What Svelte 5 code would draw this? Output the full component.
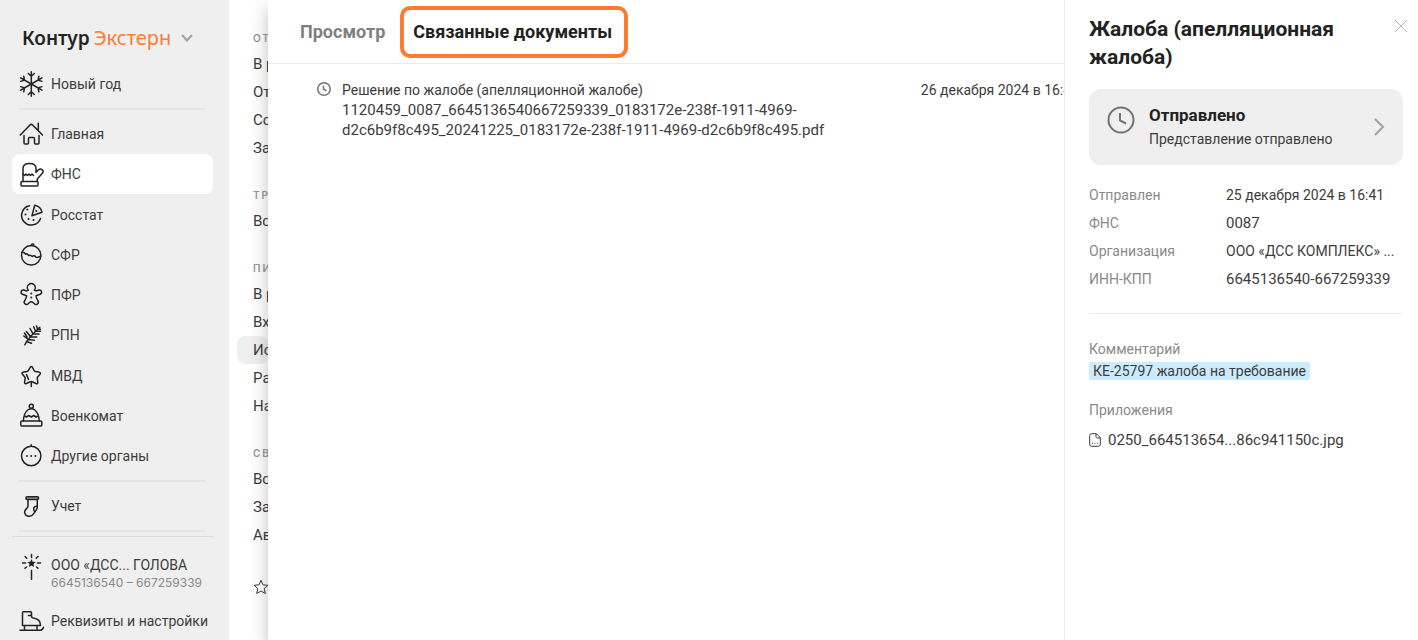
<script>
    let activeItem = "ФНС";
    let activeTab = "Связанные документы";

    const organs = [
        { label: "Главная", icon: "house" },
        { label: "ФНС", icon: "mitten" },
        { label: "Росстат", icon: "pizza" },
        { label: "СФР", icon: "ball" },
        { label: "ПФР", icon: "cookie" },
        { label: "РПН", icon: "branch" },
        { label: "МВД", icon: "star" },
        { label: "Военкомат", icon: "hat" },
        { label: "Другие органы", icon: "dots" },
    ];

    const sections = [
        { title: "От", links: ["В р", "От", "Со", "За"] },
        { title: "Тр", links: ["Вс"] },
        { title: "Пи", links: ["В р", "Вх", "Ис", "Ра", "На"] },
        { title: "Св", links: ["Вс", "За", "Ав"] },
    ];

    const tabs = ["Просмотр", "Связанные документы"];

    const details = [
        { term: "Отправлен", value: "25 декабря 2024 в 16:41" },
        { term: "ФНС", value: "0087", code: true },
        { term: "Организация", value: "ООО «ДСС КОМПЛЕКС» ..." },
        { term: "ИНН-КПП", value: "6645136540-667259339", code: true },
    ];
</script>

{#snippet icon(name)}
    <svg class="icon" viewBox="0 0 24 24" aria-hidden="true">
        {#if name === "snow"}
            {#each [0, 60, 120, 180, 240, 300] as angle}
                <path d="M12.3 12V-.3M9.300 1.500l3 2.700 3-2.700" transform="rotate({angle} 12.3 12)" />
            {/each}
        {:else if name === "house"}
            <path d="M1.300 13 11 3q1.300-1.200 2.600 0L23.500 13M19.300 1.300V8" />
            <path d="M5 13.500V21q0 1 1 1h2.500q1 0 1-1v-4.500q0-1 1-1h4q1 0 1 1V21q0 1 1 1H19q1 0 1-1v-7.500" />
        {:else if name === "mitten"}
            <path d="M4 19.500V6.500q0-5 6.500-5T17 6.500v4l2.500-2.700q1.800-1.500 3.600-.2t.5 3.400L18.300 17v2.500" />
            <rect x="2" y="19.500" width="17" height="4.500" rx="1" />
            <path d="m4 12 1.500 1.500L7 12l1.500 1.500L10 12l1.500 1.500L13 12l1.500 1.500" />
        {:else if name === "pizza"}
            <path d="M10.500 2.800a9.700 9.700 0 1 0 11 12.700" />
            <path d="M15.700 2.300q6 1 7.300 7l-10 3.400z" />
            <path class="dot" d="M8.300 6.500h0M6.500 11.500h0M9.500 16h0M14.500 17h0M17.300 8h0" />
        {:else if name === "ball"}
            <circle cx="12.200" cy="12.300" r="9.700" />
            <path d="M2.800 9.500q2.200-.7 3.700 1.700 1.500-1 3.200 1.300 2-.8 3.600 1 2-2 3.800.8 2 .4 4.500-1.200M12.200 2.600q.3-2 2.500-1.300" />
        {:else if name === "cookie"}
            <path d="M9.300 7.200a4 4 0 1 1 6 0q1 .8 2.200.5l2.500-.7a2.200 2.200 0 0 1 1.200 4.200L17 12.800q.2 2.500 1.800 4.700 1.500 2.500-.5 3.700t-3.800-1.300q-2.200-2.300-4.400 0-1.800 2.500-3.800 1.300t-.5-3.700q1.600-2.200 1.800-4.700L3.400 11.200A2.200 2.200 0 0 1 4.600 7l2.500.7q1.200.3 2.200-.5z" />
            <path class="dot" d="M12.300 10.500h0M12.300 14.500h0" />
        {:else if name === "branch"}
            <path d="M5.800 21.700Q9 15 20.800 4.200M9.300 16.500 4.800 13M11.500 13.700 7.500 8.500M14 10.800 11 5.500M16.500 8.200 14.700 3.700M18.500 6 17.500 3M9.300 16.500l6 .7M11.500 13.700l6.300.2M14 10.800l6 .3M16.500 8.200l5 .1M8 14l-2.500-4M7.500 18.500l5 1.700M18.500 6l3 .2" />
        {:else if name === "star"}
            <path d="M13.500 3.500q-1.200-2-2.400 0L9.300 6.700q-.4.700-1.200.8l-3.700.6Q2 8.800 3.600 10.600l2 2.200q.6.700.5 1.600l-.5 3.800q-.1 2.200 1.900 1.300l3.700-1.700q1-.5 2 0l3.700 1.700q2 .9 1.900-1.300l-.5-3.800q-.1-.9.500-1.600l2-2.200q1.600-1.800-.8-2.500l-3.700-.6q-.8-.1-1.200-.8z" />
            <path d="M12.300 18v4.500M7.500 10.500l2 5" />
        {:else if name === "hat"}
            <circle cx="12.300" cy="2.300" r="2" />
            <path d="M4.300 17q.5-8 4.500-11 3.500-2.500 7 0 4 3 4.500 11M5.500 11.800l2 1.200 2.300-1.500 2.500 1.500 2.500-1.500 2.300 1.500 2-1.200" />
            <rect x="1.800" y="17" width="21" height="5" rx="1" />
        {:else if name === "dots"}
            <circle cx="12.200" cy="12" r="9.700" />
            <path d="M12.200.8v1.500" />
            <path class="dot" d="M8 12h0M12.200 12h0M16.400 12h0" />
        {:else if name === "sock"}
            <rect x="7" y="2.800" width="12.500" height="2.800" rx="1" fill="#999" />
            <path d="M9 5.800V12q0 1.500-1.700 2.800-2.500 2-1.300 5t4.800 2.500q2.500-.5 4.500-3.500l2-3q1-1.200 1-3v-7M18 12q-5 .5-2.500 5.500" />
        {:else if name === "wand"}
            <path d="M12.500 15.500v8.800M12.500-.5v3M3.500 8h3M18.500 8h3M6 1.500l1.800 1.800M19 1.500l-1.800 1.800M6 13.300 7.500 12M19 13.300 17.500 12" />
            <path class="solid" d="m12.500 4 1.200 2.700 3 .3-2.200 2 .6 3-2.600-1.500L9.900 12l.6-3-2.200-2 3-.3z" />
        {:else if name === "skate"}
            <path d="M3.500 16.500V3.800q0-1 1-1h7q1 0 1 1v3.500q0 1.500 1.700 1.800 7.300 1 7.300 7.400zM12.500 6.500h-3M5.500 16.500V21M18 16.500V21M1 21.200h20q3 0 3.500-3" />
        {/if}
    </svg>
{/snippet}

{#snippet clock()}
    <svg class="clock" viewBox="0 0 28 28" aria-hidden="true">
        <circle cx="14" cy="14" r="12.500" />
        <path d="M13 7v7.500l6 3" />
    </svg>
{/snippet}

<div class="app">
    <aside class="sidebar">
        <button class="logo">
            <b>Контур</b><span>Экстерн</span>
            <svg width="12" height="8" viewBox="0 0 12 8" aria-hidden="true"><path d="m1 1 5 5.500L11 1" /></svg>
        </button>
        <a class="item" href="#new-year">{@render icon("snow")}Новый год</a>
        <hr />
        <nav class="organs">
            {#each organs as item}
                <a
                    class="item"
                    class:active={item.label === activeItem}
                    href="#{item.icon}"
                    on:click|preventDefault={() => (activeItem = item.label)}
                >
                    {@render icon(item.icon)}{item.label}
                </a>
            {/each}
        </nav>
        <hr />
        <a class="item" href="#accounting">{@render icon("sock")}Учет</a>
        <hr />
        <div class="account">
            <a class="item company" href="#company">
                {@render icon("wand")}
                <span>ООО «ДСС... ГОЛОВА<small>6645136540 – 667259339</small></span>
            </a>
            <a class="item" href="#settings">{@render icon("skate")}Реквизиты и настройки</a>
        </div>
    </aside>

    <nav class="subnav">
        {#each sections as section}
            <section>
                <h3>{section.title}</h3>
                {#each section.links as link}
                    <a class:current={link === "Ис"} href="#{link}">{link}</a>
                {/each}
            </section>
        {/each}
        <svg class="favorite" viewBox="0 0 16 16" aria-hidden="true">
            <path d="m8 1.300 2 4.500 4.900.5-3.700 3.300 1.100 4.900L8 12l-4.300 2.500 1.100-4.900L1.100 6.300 6 5.800z" />
        </svg>
    </nav>

    <div class="viewer">
        <main>
            <div class="tabs" role="tablist">
                {#each tabs as tab}
                    <button
                        role="tab"
                        aria-selected={tab === activeTab}
                        class:selected={tab === activeTab}
                        on:click={() => (activeTab = tab)}
                    >{tab}</button>
                {/each}
            </div>
            <div class="document">
                {@render clock()}
                <div class="name">
                    Решение по жалобе (апелляционной жалобе)
                    <div class="code">1120459_0087_6645136540667259339_0183172e-238f-1911-4969-d2c6b9f8c495_20241225_0183172e-238f-1911-4969-d2c6b9f8c495.pdf</div>
                </div>
                <time>26 декабря 2024 в 16:41</time>
            </div>
        </main>

        <aside class="info">
            <button class="close" aria-label="Закрыть">
                <svg width="14" height="14" viewBox="0 0 14 14"><path d="m1 1 12 12M13 1 1 13" /></svg>
            </button>
            <h1>Жалоба (апелляционная жалоба)</h1>
            <button class="status">
                {@render clock()}
                <span class="status-text"><b>Отправлено</b>Представление отправлено</span>
                <svg width="10" height="18" viewBox="0 0 10 18" aria-hidden="true"><path d="m1 1 8 8-8 8" /></svg>
            </button>
            <dl>
                {#each details as { term, value, code }}
                    <dt>{term}</dt>
                    <dd class:code>{value}</dd>
                {/each}
            </dl>
            <div class="extra">
                <h2>Комментарий</h2>
                <mark>КЕ-25797 жалоба на требование</mark>
                <h2>Приложения</h2>
                <a class="file code" href="#file">
                    <svg width="12" height="14" viewBox="0 0 12 14" aria-hidden="true">
                        <path d="M7.500.7H2.700q-2 0-2 2v8.600q0 2 2 2h6.600q2 0 2-2V4.500zM7 1v2.500q0 1.500 1.500 1.500H11" />
                        <path d="M3 10.300h1M5.500 10.300h1M8 10.300h1" />
                    </svg>
                    0250_664513654...86c941150c.jpg
                </a>
            </div>
        </aside>
    </div>
</div>

<style>
    :global(body) {
        margin: 0;
    }

    .app {
        display: flex;
        height: 100vh;
        overflow: hidden;
        background: #fff;
        color: #3d3d3d;
        font: 14px/20px Roboto, "Liberation Sans", sans-serif;
    }

    a {
        color: inherit;
        text-decoration: none;
    }

    button {
        padding: 0;
        border: 0;
        background: none;
        color: inherit;
        font: inherit;
        text-align: left;
        cursor: pointer;
    }

    svg {
        flex: none;
        overflow: visible;
        fill: none;
        stroke: currentColor;
    }

    /* Numbers and file names */
    .code {
        font-size: 15px;
    }

    /* Sidebar */
    .sidebar {
        box-sizing: border-box;
        display: flex;
        flex: none;
        flex-direction: column;
        width: 229px;
        padding: 24px 16px 0 12px;
        background: #efefef;
    }

    .logo {
        display: flex;
        align-items: center;
        height: 28px;
        margin-bottom: 12px;
        padding-left: 10px;
        color: #222;
        font: 20px/28px "Noto Sans", sans-serif;
    }

    .logo b {
        font-size: 19px;
        font-weight: 600;
    }

    .logo span {
        margin: 0 10px 0 4px;
        color: #ff7a33;
    }

    .logo svg {
        stroke: #a0a0a0;
        stroke-width: 2;
    }

    .item {
        display: flex;
        flex: none;
        align-items: center;
        gap: 8px;
        height: 40px;
        padding-left: 7px;
        border-radius: 8px;
        white-space: nowrap;
    }

    .item.active {
        background: #fff;
    }

    .icon {
        width: 24px;
        height: 24px;
        color: #222;
        stroke-width: 1.5;
        stroke-linecap: round;
        stroke-linejoin: round;
    }

    .icon .dot {
        stroke-width: 2;
    }

    .icon .solid {
        fill: currentColor;
        stroke: none;
    }

    hr {
        flex: none;
        height: 2px;
        margin: 4px 8px 4px 7px;
        border: 0;
        background: #e4e4e4;
    }

    .organs {
        display: flex;
        flex: 1;
        flex-direction: column;
        justify-content: space-between;
    }

    .account {
        flex: none;
        height: 103px;
        border-top: 1px solid #dcdcdc;
    }

    .company {
        align-items: flex-start;
        height: 46px;
        padding-top: 18px;
    }

    .company small {
        display: block;
        color: #8a8a8a;
        font: 12px/16px Inter, sans-serif;
    }

    .subnav {
        box-sizing: border-box;
        display: flex;
        flex: none;
        flex-direction: column;
        gap: 21px;
        width: 39px;
        padding: 26px 0 0 8px;
        overflow: hidden;
        white-space: nowrap;
    }

    .subnav h3 {
        margin: 0;
        padding-left: 16px;
        color: #999;
        font: 600 10px/24px Inter, sans-serif;
        letter-spacing: 2px;
        text-transform: uppercase;
    }

    .subnav a {
        display: block;
        padding-left: 16px;
        border-radius: 8px;
        font-size: 15px;
        line-height: 28px;
    }

    .subnav .current {
        background: #efefef;
    }

    .favorite {
        width: 16px;
        height: 16px;
        margin: 9px 0 0 16px;
    }

    /* Viewer */
    .viewer {
        display: flex;
        flex: 1;
        min-width: 0;
        background: #fff;
        box-shadow: 0 8px 16px rgba(0, 0, 0, 0.25);
    }

    main {
        flex: 1;
        min-width: 0;
        overflow: hidden;
    }

    .tabs {
        box-sizing: border-box;
        display: flex;
        align-items: center;
        gap: 15px;
        height: 64px;
        padding-left: 32px;
        border-bottom: 1px solid #ebebeb;
        color: #808080;
        font-size: 18px;
        font-weight: 700;
    }

    .tabs .selected {
        height: 52px;
        padding: 0 12px 0 9px;
        border: 4px solid #ff7a33;
        border-radius: 10px;
        color: #222;
    }

    .document {
        display: flex;
        margin: 16px -15px 0 49px;
    }

    .clock {
        width: 14px;
        height: 14px;
        margin: 2px 11px 0 0;
        color: #737373;
        stroke-width: 3;
    }

    .name {
        max-width: 500px;
    }

    .document time {
        margin-left: auto;
        white-space: nowrap;
    }

    /* Document info */
    .info {
        position: relative;
        box-sizing: border-box;
        flex: none;
        width: 354px;
        padding: 15px 15px 0 24px;
        border-left: 1px solid #ebebeb;
    }

    .close {
        position: absolute;
        top: 19px;
        right: 10px;
        display: flex;
        color: #b3b3b3;
    }

    h1 {
        margin: 0 40px 18px 0;
        color: #222;
        font-size: 21px;
        line-height: 28px;
    }

    .status {
        box-sizing: border-box;
        display: flex;
        align-items: center;
        width: 100%;
        height: 76px;
        padding: 0 19px 0 18px;
        border-radius: 12px;
        background: #efefef;
    }

    .status .clock {
        align-self: flex-start;
        width: 28px;
        height: 28px;
        margin: 17px 14px 0 0;
        stroke-width: 2;
    }

    .status-text {
        flex: 1;
        padding-bottom: 4px;
    }

    .status b {
        display: block;
        color: #222;
        font-size: 17px;
        line-height: 28px;
    }

    .status > svg:last-child {
        color: #a0a0a0;
        stroke-width: 2;
    }

    dl {
        display: grid;
        grid-template-columns: 137px 1fr;
        margin: 16px 0 0;
        padding-bottom: 20px;
        border-bottom: 1px solid #ebebeb;
        line-height: 28px;
        white-space: nowrap;
    }

    dt,
    h2 {
        color: #8a8a8a;
    }

    dd {
        margin: 0;
    }

    h2 {
        margin: 0;
        font-size: 14px;
        font-weight: 400;
        line-height: 20px;
    }

    .extra {
        display: flex;
        flex-direction: column;
        align-items: flex-start;
        padding-top: 25px;
    }

    mark {
        margin: 3px 0 20px;
        padding: 0 4px;
        border-radius: 2px;
        background: #cdebff;
        color: inherit;
        line-height: 18px;
    }

    .file {
        display: flex;
        align-items: center;
        gap: 7px;
        margin-top: 10px;
    }
</style>
